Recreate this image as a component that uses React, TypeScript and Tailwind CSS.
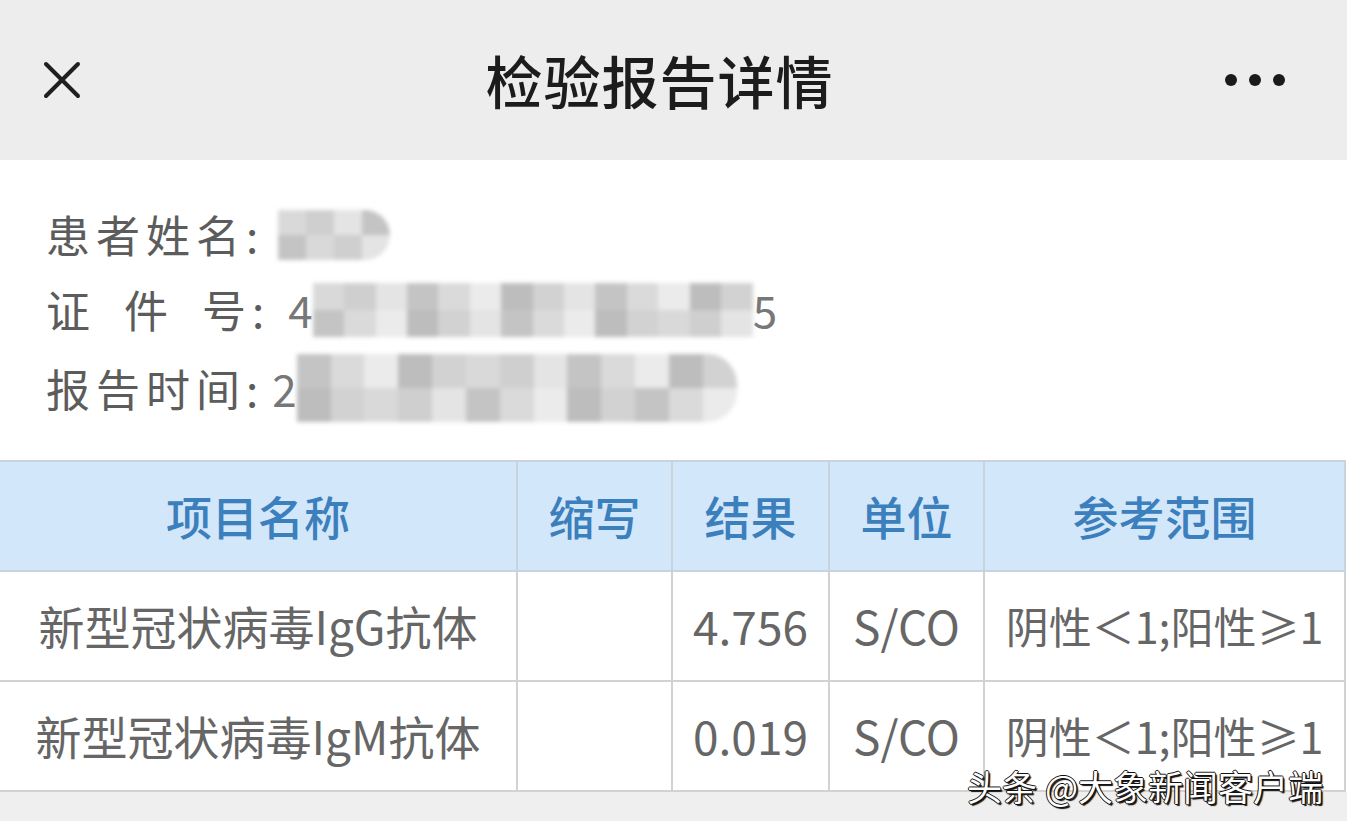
import { X } from "lucide-react";

const FONT = { fontFamily: '"Noto Sans CJK SC", "Noto Sans", sans-serif' };

const ROWS = [
  { name: "新型冠状病毒IgG抗体", abbr: "", result: "4.756", unit: "S/CO", range: "阴性＜1;阳性≥1" },
  { name: "新型冠状病毒IgM抗体", abbr: "", result: "0.019", unit: "S/CO", range: "阴性＜1;阳性≥1" },
];

// pixelated blur block standing in for redacted text
function Mosaic({ cells, className }: { cells: string[]; className: string }) {
  return (
    <div className={`flex overflow-hidden blur-[2px] ${className}`}>
      {cells.map((c, i) => (
        <div key={i} className="flex flex-1 flex-col">
          <div className="flex-1" style={{ backgroundColor: c }} />
          <div className="flex-1" style={{ backgroundColor: cells[(i + 3) % cells.length] }} />
        </div>
      ))}
    </div>
  );
}

const GRAYS = ["#d9d9d9", "#cfcfcf", "#e4e4e4", "#c4c4c4", "#dadada", "#ebebeb", "#bdbdbd", "#d2d2d2"];

export default function App() {
  return (
    <div className="relative h-[821px] w-full overflow-hidden bg-[#efefef]" style={FONT}>
      <header className="flex h-[160px] items-center justify-between bg-[#ededed] pl-[30px] pr-[62px]">
        <X className="h-[64px] w-[64px] text-[#1f1f1f]" strokeWidth={1.5} />
        <h1 className="text-[57px] font-medium tracking-[1px] text-[#1c1c1c]">检验报告详情</h1>
        <div className="flex items-center gap-[12px]">
          <span className="h-[12px] w-[12px] rounded-full bg-[#1a1a1a]" />
          <span className="h-[12px] w-[12px] rounded-full bg-[#1a1a1a]" />
          <span className="h-[12px] w-[12px] rounded-full bg-[#1a1a1a]" />
        </div>
      </header>

      <section className="flex flex-col gap-[14px] bg-white pb-[38px] pl-[46px] pt-[44px] text-[44px] leading-[61px] text-[#5c5c5c]">
        <div className="flex items-center">
          <span className="tracking-[6px]">患者姓名:</span>
          <Mosaic cells={GRAYS.slice(0, 4)} className="ml-[14px] h-[50px] w-[112px] rounded-r-full" />
        </div>
        <div className="flex items-center">
          <span className="flex w-[200px] justify-between"><span>证</span><span>件</span><span>号</span></span>
          <span className="ml-[6px]">:</span>
          <span className="ml-[24px] text-[#777]">4</span>
          <Mosaic cells={[...GRAYS, ...GRAYS.slice(2)]} className="h-[54px] w-[440px]" />
          <span className="text-[#777]">5</span>
        </div>
        <div className="flex items-center">
          <span className="tracking-[6px]">报告时间:</span>
          <span className="ml-[8px] text-[#777]">2</span>
          <Mosaic cells={[...GRAYS.slice(3), ...GRAYS]} className="h-[68px] w-[440px] rounded-r-[30px]" />
        </div>
      </section>

      <div className="bg-white">
        <table className="w-[1346px] border-collapse text-center">
          <thead>
            <tr className="h-[110px] bg-[#d3e7fb] text-[46px] leading-[1.2] text-[#3b7fbc]">
              <th className="w-[517px] border-2 border-l-0 border-[#c9d3dc] font-medium">项目名称</th>
              <th className="w-[155px] border-2 border-[#c9d3dc] font-medium">缩写</th>
              <th className="w-[157px] border-2 border-[#c9d3dc] font-medium">结果</th>
              <th className="w-[155px] border-2 border-[#c9d3dc] font-medium">单位</th>
              <th className="border-2 border-[#c9d3dc] font-medium">参考范围</th>
            </tr>
          </thead>
          <tbody className="text-[46px] leading-[1.2] text-[#666]">
            {ROWS.map((r) => (
              <tr key={r.name} className="h-[110px]">
                <td className="whitespace-nowrap border-2 border-l-0 border-[#d2d2d2]">{r.name}</td>
                <td className="border-2 border-[#d2d2d2]">{r.abbr}</td>
                <td className="border-2 border-[#d2d2d2]">{r.result}</td>
                <td className="border-2 border-[#d2d2d2]">{r.unit}</td>
                <td className="whitespace-nowrap border-2 border-[#d2d2d2] text-[43px]">{r.range}</td>
              </tr>
            ))}
          </tbody>
        </table>
      </div>

      <div
        className="absolute bottom-[18px] right-[24px] text-[35px] leading-none text-white"
        style={{ textShadow: "-1px 0 #111, 1px 0 #111, 0 -1px #111, 0 1px #111, 2px 2px 1px #111" }}
      >
        头条 @大象新闻客户端
      </div>
    </div>
  );
}
